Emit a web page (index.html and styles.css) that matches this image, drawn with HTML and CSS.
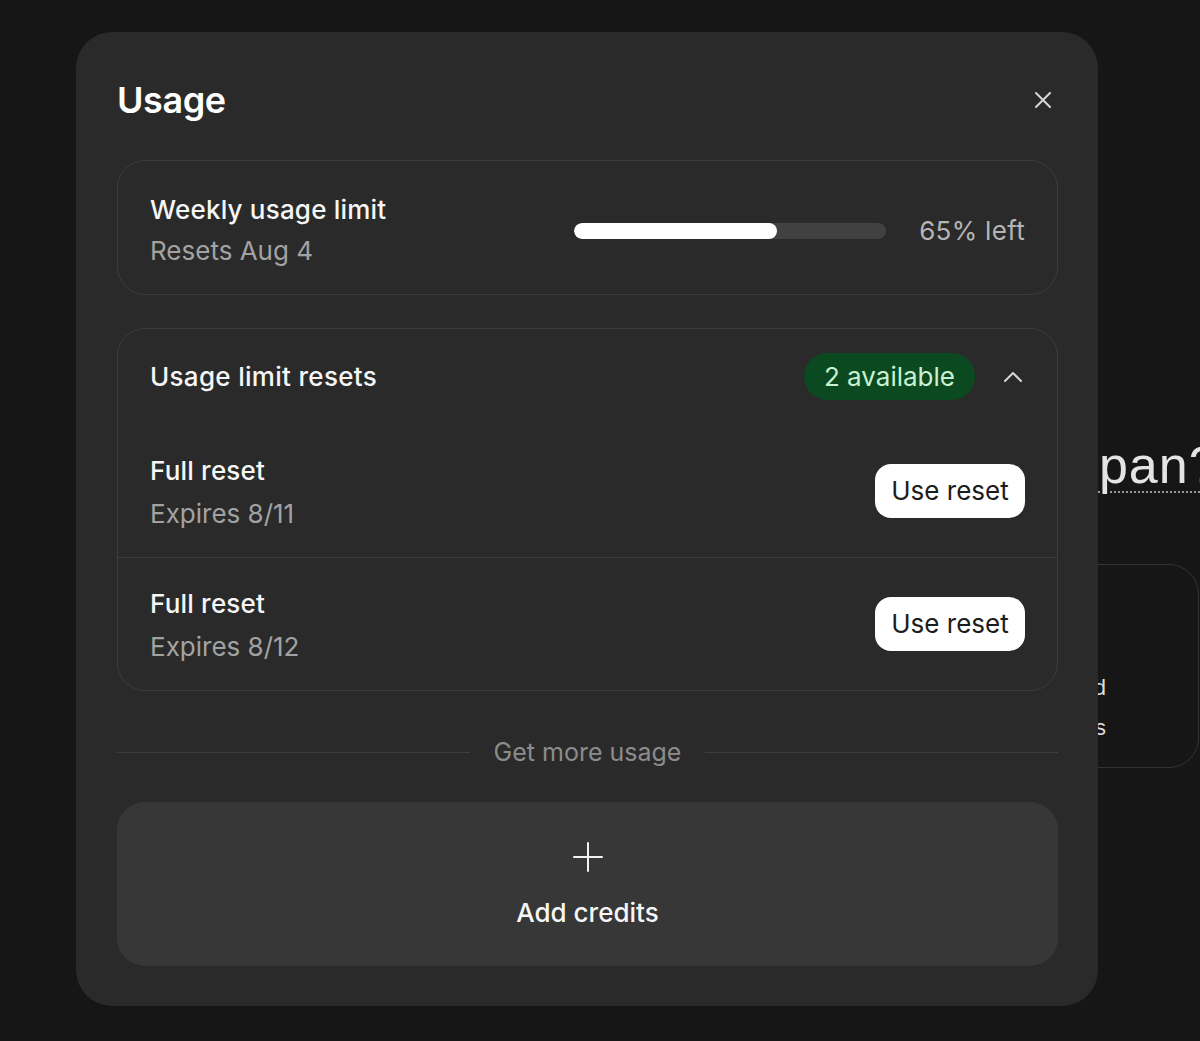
FILE: index.html
```html
<!DOCTYPE html>
<html lang="en">
<head>
<meta charset="utf-8">
<title>Usage</title>
<link rel="stylesheet" href="styles.css">
</head>
<body>
<div class="page">
  <div class="backdrop-heading"><span class="dotted">Japan?</span></div>
  <div class="backdrop-card">
    <div class="backdrop-line">Research and</div>
    <div class="backdrop-line">plan your trips</div>
  </div>

  <div class="modal">
    <div class="modal-header">
      <h1 class="modal-title">Usage</h1>
      <svg class="close-icon" width="18" height="18" viewBox="0 0 18 18" fill="none" stroke="#d6d6d6" stroke-width="2" stroke-linecap="round"><path d="M2 2L16 16M16 2L2 16"/></svg>
    </div>

    <div class="card weekly">
      <div class="weekly-info">
        <div class="line-title">Weekly usage limit</div>
        <div class="line-sub">Resets Aug 4</div>
      </div>
      <div class="bar"><div class="bar-fill" style="width:65%"></div></div>
      <div class="pct">65% left</div>
    </div>

    <div class="card resets">
      <div class="resets-head">
        <div class="resets-title">Usage limit resets</div>
        <div class="badge">2 available</div>
        <svg class="chevron" width="20" height="12" viewBox="0 0 20 12" fill="none" stroke="#d6d6d6" stroke-width="2" stroke-linecap="round" stroke-linejoin="round"><path d="M2 10L10 2L18 10"/></svg>
      </div>
      <div class="reset-row">
        <div class="reset-info">
          <div class="line-title">Full reset</div>
          <div class="line-sub">Expires 8/11</div>
        </div>
        <button class="use-btn"><span>Use reset</span></button>
      </div>
      <div class="reset-row">
        <div class="reset-info">
          <div class="line-title">Full reset</div>
          <div class="line-sub">Expires 8/12</div>
        </div>
        <button class="use-btn"><span>Use reset</span></button>
      </div>
    </div>

    <div class="divider"><span>Get more usage</span></div>

    <div class="add-credits">
      <svg class="plus" width="30" height="30" viewBox="0 0 30 30" fill="none" stroke="#f2f2f2" stroke-width="2" stroke-linecap="round"><path d="M15 1V29M1 15H29"/></svg>
      <div class="add-label">Add credits</div>
    </div>
  </div>
</div>
</body>
</html>
```

FILE: styles.css
```css
html, body {
  margin: 0;
  padding: 0;
}

body {
  background: #161616;
  font-family: Inter, "Noto Sans", "Liberation Sans", sans-serif;
  color: #f4f4f4;
  width: 1200px;
  height: 1041px;
  overflow: hidden;
}

.page {
  position: relative;
  width: 1200px;
  height: 1041px;
  overflow: hidden;
}

/* page behind the dialog */
.backdrop-heading {
  position: absolute;
  top: 435px;
  left: 1042px;
  white-space: nowrap;
  font-family: "Liberation Sans", Arial, sans-serif;
  font-size: 52px;
  line-height: 60px;
  letter-spacing: 1px;
  color: #e4e4e4;
}

.dotted {
  text-decoration: underline dotted #9a9a9a;
  text-decoration-thickness: 2px;
  text-underline-offset: 8px;
}

.backdrop-card {
  position: absolute;
  left: 700px;
  top: 564px;
  width: 499px;
  height: 204px;
  box-sizing: border-box;
  border: 1px solid #333333;
  border-radius: 30px;
  padding: 103px 92px 0 0;
  text-align: right;
  font-family: "Liberation Sans", Arial, sans-serif;
  font-size: 22px;
  line-height: 40px;
  color: #dcdcdc;
}

/* dialog */
.modal {
  position: absolute;
  left: 76px;
  top: 32px;
  width: 1022px;
  height: 974px;
  box-sizing: border-box;
  background: #2a2a2a;
  border-radius: 36px;
  padding: 46px 40px 39px 41px;
  display: flex;
  flex-direction: column;
}

.modal-header {
  display: flex;
  align-items: center;
  justify-content: space-between;
  height: 44px;
}

.modal-title {
  margin: 0;
  font-size: 36px;
  font-weight: 600;
  letter-spacing: -0.4px;
  color: #ffffff;
}

.close-icon {
  margin-right: 6px;
}

.card {
  border: 1px solid #3d3d3d;
  border-radius: 28px;
}

.weekly {
  margin-top: 38px;
  display: flex;
  align-items: center;
  padding: 32px 32px 26px 32px;
}

.weekly-info {
  flex: 1;
}

.line-title {
  font-size: 26px;
  line-height: 34px;
  font-weight: 500;
  letter-spacing: 0.2px;
  color: #f6f6f6;
}

.line-sub {
  font-size: 26px;
  line-height: 34px;
  margin-top: 7px;
  color: #a2a2a2;
}

.bar {
  width: 312px;
  height: 16px;
  background: #414141;
  border-radius: 8px;
  overflow: hidden;
}

.bar-fill {
  height: 100%;
  background: #ffffff;
  border-radius: 8px;
}

.pct {
  margin-left: 33px;
  font-size: 26px;
  letter-spacing: 0.3px;
  color: #b4b4b4;
}

.resets {
  margin-top: 33px;
}

.resets-head {
  display: flex;
  align-items: center;
  padding: 24px 34px 25px 32px;
}

.resets-title {
  flex: 1;
  font-size: 26px;
  font-weight: 500;
  letter-spacing: 0.3px;
  color: #f6f6f6;
}

.badge {
  height: 47px;
  padding: 0 20px;
  border-radius: 24px;
  background: #0b4a20;
  color: #c8f0d1;
  font-size: 26px;
  display: flex;
  align-items: center;
}

.chevron {
  margin-left: 28px;
}

.reset-row {
  display: flex;
  align-items: center;
  height: 132px;
  padding: 0 32px;
}

.reset-row + .reset-row {
  border-top: 1px solid #3d3d3d;
}

.reset-info {
  flex: 1;
  padding-top: 2px;
}

.reset-row .line-sub {
  margin-top: 9px;
}

.use-btn {
  display: inline-flex;
  align-items: center;
  justify-content: center;
  height: 54px;
  width: 150px;
  padding: 0;
  border: none;
  border-radius: 16px;
  background: #ffffff;
  color: #1c1c1c;
  font-family: inherit;
  font-size: 26px;
  line-height: 34px;
  font-weight: 400;
}

.divider {
  margin-top: 47px;
  height: 28px;
  display: flex;
  align-items: center;
  gap: 24px;
  font-size: 25px;
  color: #8c8c8c;
}

.divider::before,
.divider::after {
  content: "";
  flex: 1;
  height: 1px;
  background: #3e3e3e;
}

.add-credits {
  margin-top: 36px;
  height: 164px;
  box-sizing: border-box;
  background: #373737;
  border-radius: 28px;
  display: flex;
  flex-direction: column;
  align-items: center;
  padding-top: 40px;
}

.add-label {
  margin-top: 24px;
  font-size: 26px;
  line-height: 34px;
  font-weight: 500;
  color: #f6f6f6;
}
```
